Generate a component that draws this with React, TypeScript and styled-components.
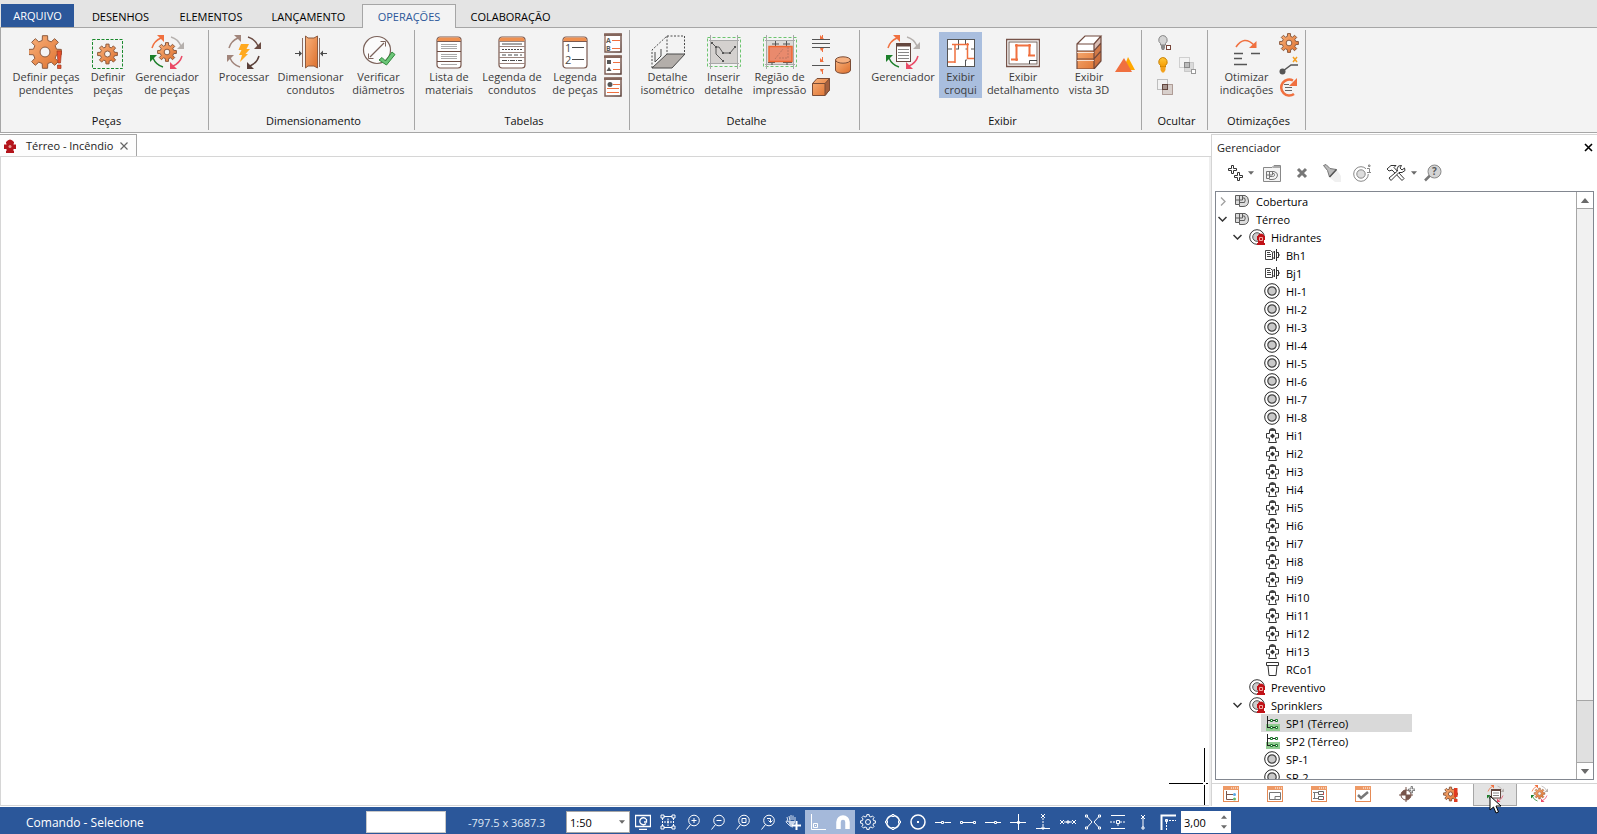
import React from "react";
import styled, { createGlobalStyle, css } from "styled-components";

const GlobalStyle = createGlobalStyle`
  * { box-sizing: border-box; }
  body {
    margin: 0;
    background: #fff;
    font-family: "Open Sans", "Noto Sans", sans-serif;
    font-size: 11px;
    line-height: 13px;
    color: #111;
  }
  button, input, select { font: inherit; color: inherit; }
  button { border: 0; padding: 0; background: none; cursor: default; }
  svg { display: block; flex: none; }
`;

/* ---------- palette ---------- */
const BLUE = "#2b579a";
const LIGHT = "#a9bede";
const ORANGE = "#f0703f";
const BROWN = "#6b4c43";
const INK = "#4a4a4a";

/* ---------- icon helpers ---------- */
function gearPath(cx: number, cy: number, outer: number, inner: number, teeth = 8) {
  const step = (Math.PI * 2) / teeth;
  const pts: string[] = [];
  for (let i = 0; i < teeth; i++) {
    const a = i * step - Math.PI / 2;
    const corners: [number, number][] = [
      [-0.3, inner],
      [-0.2, outer],
      [0.2, outer],
      [0.3, inner],
    ];
    corners.forEach(([k, r]) => {
      pts.push(`${(cx + r * Math.cos(a + k * step)).toFixed(2)} ${(cy + r * Math.sin(a + k * step)).toFixed(2)}`);
    });
  }
  return `M${pts.join("L")}Z`;
}

const HiddenDefs = styled.svg`
  position: absolute;
`;

const Defs = () => (
  <HiddenDefs width="0" height="0" aria-hidden="true">
    <defs>
      <linearGradient id="copper" x1="0" y1="0" x2="1" y2="1">
        <stop offset="0" stopColor="#f9b27c" />
        <stop offset="1" stopColor="#dd6f2c" />
      </linearGradient>
      <linearGradient id="amber" x1="0" y1="0" x2="0" y2="1">
        <stop offset="0" stopColor="#ffc83a" />
        <stop offset="1" stopColor="#f59b00" />
      </linearGradient>
      <linearGradient id="bark" x1="0" y1="0" x2="1" y2="1">
        <stop offset="0" stopColor="#a78378" />
        <stop offset="1" stopColor="#5a3f38" />
      </linearGradient>
    </defs>
  </HiddenDefs>
);

type IconProps = { w?: number; h?: number; children: React.ReactNode; box?: string };
const Icon = ({ w = 34, h, box, children }: IconProps) => (
  <svg width={w} height={h ?? w} viewBox={box ?? `0 0 ${w} ${h ?? w}`} fill="none" aria-hidden="true">
    {children}
  </svg>
);

const Gear = ({ x, y, r }: { x: number; y: number; r: number }) => (
  <g>
    <path d={gearPath(x, y, r, r * 0.72)} fill="url(#copper)" stroke="#8c5a3f" strokeWidth="1" />
    <circle cx={x} cy={y} r={r * 0.3} fill="#f5f5f5" stroke="#8c5a3f" />
  </g>
);

const Cycle = ({ colors }: { colors: string[] }) => (
  <g>
    {colors.map((c, i) => (
      <g key={i} transform={`rotate(${i * 90} 17 17)`}>
        <path d="M2 13Q4 6 11 3" stroke={c} strokeWidth="1.5" />
        <path d="M7 0H14V7Z" fill={c} />
      </g>
    ))}
  </g>
);
const MIX = [ORANGE, "#b5b0ad", "#ea4a66", "#1c7f2a"];
const BROWNS = ["#a1857b", "#6b4c43", "#5a4039", "#a1857b"];

const GreenTick = () => (
  <path d="M17 25L20 22.500L23.500 26L30 17L33 19.500L24.500 30Z" fill="#6cc578" stroke="#2f8a3c" />
);

const Sheet = ({ children }: { children: React.ReactNode }) => (
  <Icon>
    <rect x="5" y="2" width="24" height="31" rx="3" fill="#fff" stroke="#7b5a50" strokeWidth="1.2" />
    <path d="M5.500 6V5Q5.500 2.500 8 2.500H26Q28.500 2.500 28.500 5V6Z" fill="#ef9050" />
    <path d="M5 6.500H29" stroke="#7b5a50" />
    {children}
  </Icon>
);

/* ---------- large ribbon icons ---------- */
const GearAlert = () => (
  <Icon>
    <Gear x={16} y={17} r={16.500} />
    <path d="M28 16H32.500L31.500 28H29ZM28.500 30H32V33.500H28.500Z" fill="#e8502c" stroke="#9c3a20" strokeWidth=".7" />
  </Icon>
);
const GearBox = () => (
  <Icon>
    <rect x="1.500" y="4.500" width="30" height="29" stroke="#1c8a2e" strokeDasharray="3 1.500" />
    <Gear x={16.500} y={19} r={10} />
  </Icon>
);
const GearCycle = () => (
  <Icon>
    <Cycle colors={MIX} />
    <Gear x={17} y={17} r={9.500} />
  </Icon>
);
const Bolt = () => (
  <Icon>
    <Cycle colors={BROWNS} />
    <path d="M14 9H22L19.500 14H23L18.500 19H21L13 27L15 20H12L14.500 15H11.500Z" fill="#ffa91f" />
  </Icon>
);
const DuctSize = () => (
  <Icon>
    <path d="M11.500 1L14 3H20L23.500 1V33L20 31H14L11.500 33Z" fill="url(#copper)" stroke="#8c5a3f" />
    <path d="M8.500 3V32M25.500 3V32" stroke="#8c6f66" />
    <path d="M1 18.500H6M28 18.500H33" stroke={INK} />
    <path d="M5 15.500L8 18.500L5 21.500ZM29 15.500L26 18.500L29 21.500Z" fill={INK} />
  </Icon>
);
const DiameterCheck = () => (
  <Icon>
    <circle cx="15" cy="15" r="13.500" fill="#fbfbfb" stroke="#7b625a" strokeWidth="1.2" />
    <path d="M8 22L22 8" stroke="#7b625a" strokeWidth="1.300" />
    <path d="M6.500 18.500V23.500H11.500M18.500 6.500H23.500V11.500" stroke="#7b625a" />
    <GreenTick />
  </Icon>
);
const MaterialSheet = () => (
  <Sheet>
    <path d="M9 9.500H25M9 11.500H25M9 13.500H25M9 19.500H25M9 21.500H25M9 23.500H25M9 29.500H25" stroke="#aaa" />
    <path d="M5 16.500H29M5 26.500H29" stroke={BROWN} />
  </Sheet>
);
const LineSheet = () => (
  <Icon>
    <rect x="4" y="2" width="26" height="31" rx="3" fill="#fff" stroke="#7b5a50" strokeWidth="1.2" />
    <path d="M4.500 6V5Q4.500 2.500 7 2.500H27Q29.500 2.500 29.500 5V6Z" fill="#ef9050" />
    <path d="M4 6.500H30M4 11.500H30M4 17.500H30M4 22.500H30M4 28.500H30" stroke="#9c867f" />
    <path d="M7 9H27" stroke={INK} />
    <path d="M7 14.500H27" stroke={INK} strokeDasharray="2 1" />
    <path d="M7 20H27" stroke={INK} strokeDasharray="4 2" />
    <path d="M7 25.500H27" stroke={INK} strokeDasharray="5 1 1 1" />
  </Icon>
);
const SvgText = styled.text<{ $size?: number }>`
  font: bold ${(p) => p.$size ?? 10}px "Open Sans", sans-serif;
  fill: #5a5a5a;
`;
const PlainText = styled.text`
  font: 11px "Open Sans", sans-serif;
  fill: #4a4a4a;
`;
const NumberSheet = () => (
  <Sheet>
    <PlainText x="7" y="17">1</PlainText>
    <PlainText x="7" y="29">2</PlainText>
    <path d="M14 12.500H26M14 24.500H26" stroke={INK} />
  </Sheet>
);
const Isometric = () => (
  <Icon>
    <path d="M16 19H34L21 33H1Z" fill="#b3aeaa" stroke={INK} />
    <path d="M1 33V15L16 1V19M16 1H33.500V19" stroke={INK} strokeDasharray="2 1.500" />
    <path d="M4 17V27L10 21V14" stroke={INK} />
  </Icon>
);
const InsertDetail = () => (
  <Icon>
    <rect x="0.500" y="2.500" width="33" height="29" stroke="#6cc56f" strokeDasharray="3 2" />
    <rect x="4" y="5" width="26" height="24" fill="#d4d1cf" />
    <path d="M3.500 0V34M30.500 0V34M2 5.500H32M2 28.500H32" stroke="#a9a9a9" />
    <path d="M5 8L9 12H12L16 18H23L28 12M9 12V19L16 26" stroke="#555" />
    <path d="M4 7H6V9H4ZM8 11H10V13H8ZM15 17H17V19H15ZM22 17H24V19H22ZM27 11H29V13H27ZM15 25H17V27H15Z" fill="#555" />
  </Icon>
);
const PrintRegion = () => (
  <Icon>
    <rect x="0.500" y="2.500" width="33" height="29" stroke="#6cc56f" strokeDasharray="3 2" />
    <path d="M3.500 0V34M30.500 0V34M2 5.500H32M2 29.500H32" stroke="#a9a9a9" />
    <rect x="4" y="6" width="26" height="23" fill="#dcdad8" />
    <path d="M12.500 6V12M23.500 6V12M9 9H16M20 9H27M5 27.500H12M9 22V30M24 24V30M20 27.500H29" stroke="#555" />
    <rect x="6" y="11.500" width="23" height="15" fill="#e98a6d" stroke="#f0652f" strokeWidth="1.500" />
    <path d="M25 12V23H16M12 24L20 14" stroke="#bd7560" strokeDasharray="2 1" />
  </Icon>
);
const DocCycle = () => (
  <Icon>
    <Cycle colors={MIX} />
    <rect x="10.500" y="8.500" width="14" height="18" fill="#fff" stroke="#63473f" />
    <path d="M10 10H25" stroke="#63473f" strokeWidth="3" />
    <path d="M12 14.500H23M12 17.500H23M12 20.500H23M12 23.500H23" stroke="#888" />
  </Icon>
);
const Sketch = () => (
  <Icon>
    <rect x="3.500" y="4.500" width="27" height="27" fill="#fff" stroke="#555" />
    <path d="M14.500 5V14M21.500 5V9M4 14H8M12 14H15M21.500 25V31M21.500 25H23M27 14H30M21.500 14H24" stroke="#555" />
    <path d="M4 27H11M11 28V9M8 9.500H25M23.500 8V24M23 23.500H30" stroke={ORANGE} strokeWidth="1.500" />
  </Icon>
);
const DetailSheet = () => (
  <Icon>
    <rect x="0.500" y="4.500" width="33" height="27" fill="#fff" stroke="#77544a" strokeWidth="1.500" />
    <rect x="3" y="7" width="28" height="22" stroke="#77645c" />
    <path d="M5 24.500H12M10.500 26V9M9 10.500H25M23.500 9V20M22 20.500H29" stroke={ORANGE} strokeWidth="2" />
    <path d="M23.500 29V25.500H31" stroke="#444" />
  </Icon>
);
const Building = () => (
  <Icon>
    <path d="M5 9L13 1H29L22 9V34H5Z" fill="#fff" />
    <path d="M5 16H22L29 8V26L22 34H5Z" fill="url(#copper)" />
    <path d="M22 9L29 1V26L22 34Z" fill="#a8593e" fillOpacity=".35" />
    <path d="M5 9H22V34H5ZM5 9L13 1H29L22 9M29 1V26L22 34M5 16H22L29 8M5 24H22L29 16" stroke="#70493d" strokeWidth="1.200" />
    <path d="M5 17.500H22M5 25.500H22" stroke="#fff" strokeOpacity=".7" />
  </Icon>
);
const Optimize = () => (
  <Icon>
    <path d="M6 12Q14 0 24 10" stroke={ORANGE} strokeWidth="1.500" />
    <path d="M26.500 6V13H19Z" fill={ORANGE} />
    <path d="M4 18.500H13M21 18.500H30M4 23.500H12M4 29.500H17" stroke="#555" strokeWidth="1.600" />
  </Icon>
);

/* ---------- small ribbon icons ---------- */
const MiniSheet = ({ children }: { children: React.ReactNode }) => (
  <Icon w={18} h={20}>
    <rect x="1" y="1" width="16" height="18" fill="#fff" stroke="url(#bark)" strokeWidth="1.500" />
    <path d="M0 0.500H18V3H0Z" fill="#84665c" />
    {children}
  </Icon>
);
const SheetAB = () => (
  <MiniSheet>
    <SvgText $size={7} x="2" y="10">A</SvgText>
    <SvgText $size={7} x="2" y="18">B</SvgText>
    <path d="M8 7.500H16M8 15.500H16" stroke={ORANGE} />
  </MiniSheet>
);
const SheetShapes = () => (
  <MiniSheet>
    <path d="M3 5H7V9H3ZM5 12L7.500 16H2.500Z" fill="#555" />
    <path d="M9 7.500H16M9 14.500H16" stroke={ORANGE} />
  </MiniSheet>
);
const SheetDot = () => (
  <MiniSheet>
    <circle cx="6" cy="7.500" r="2.500" fill="#555" />
    <path d="M9 7.500H16M3 11.500H15M3 15.500H15" stroke={ORANGE} />
  </MiniSheet>
);
const LevelsTwo = () => (
  <Icon w={18}>
    <path d="M0 5.500H18M0 9.500H18M0 13.500H18" stroke="#555" />
    <path d="M10.500 1V5M10.500 14V18" stroke={ORANGE} />
    <path d="M8 1L12 5H8ZM8 14H12L9 17Z" fill={ORANGE} />
  </Icon>
);
const LevelsOne = () => (
  <Icon w={18}>
    <path d="M0 9.500H18" stroke="#555" />
    <path d="M10.500 1V6M10.500 13V18" stroke={ORANGE} />
    <path d="M8 2L12 6H8ZM8 13H12L9 16Z" fill={ORANGE} />
  </Icon>
);
const Cube = () => (
  <Icon w={18}>
    <path d="M0.500 5.500L5 0.500H17.500V12L13 17.500H0.500Z" fill="url(#copper)" stroke="#7b4d37" />
    <path d="M13 5.500L17.500 0.500V12L13 17.500Z" fill="#a6603d" stroke="#7b4d37" />
    <path d="M0.500 5.500H13" stroke="#7b4d37" />
  </Icon>
);
const Cylinder = () => (
  <Icon w={18}>
    <path d="M1.500 4V14C1.500 18.500 16.500 18.500 16.500 14V4Z" fill="url(#copper)" stroke="#7b4d37" />
    <ellipse cx="9" cy="4" rx="7.500" ry="3.200" fill="#f6b080" stroke="#7b4d37" />
  </Icon>
);
const Mountains = () => (
  <Icon w={20} h={16}>
    <path d="M13 0L20 13H8Z" fill="#ffa800" />
    <path d="M9 1L17 15H0Z" fill={ORANGE} />
  </Icon>
);
const BulbOff = () => (
  <Icon w={16} h={18}>
    <path d="M5.500 1.500A4.500 4.500 0 0 1 8.500 9.500V11H3.500V9.500A4.500 4.500 0 0 1 5.500 1.500Z" fill="#d4d4d4" stroke="#858585" />
    <path d="M4 11H8V14L7 16H5L4 14Z" fill="#8a8a8a" />
    <rect x="9.500" y="11.500" width="4" height="4" fill="#fff" stroke="#77453a" />
  </Icon>
);
const BulbOn = () => (
  <Icon w={16} h={18}>
    <path d="M5.500 1.500A4.500 4.500 0 0 1 8.500 9.500V11H3.500V9.500A4.500 4.500 0 0 1 5.500 1.500Z" fill="url(#amber)" stroke="#c98000" />
    <path d="M3.500 11H8.500V14L7 16.500H5L3.500 14Z" fill="#f3a11c" />
  </Icon>
);
const HideRegion = () => (
  <Icon w={18}>
    <rect x="1.500" y="1.500" width="10" height="10" stroke="#888" strokeDasharray="1 1" />
    <rect x="6.500" y="6.500" width="10" height="10" fill="#d8cfcb" stroke="#77544a" strokeDasharray="1 1" />
    <rect x="6.500" y="6.500" width="5" height="5" fill="#a8958e" stroke="#63473f" />
  </Icon>
);
const HideGroup = () => (
  <Icon w={18}>
    <rect x="1.500" y="1.500" width="10" height="10" stroke="#aaa" strokeDasharray="1 1" />
    <rect x="6.500" y="6.500" width="9" height="9" fill="#dadada" stroke="#aaa" strokeDasharray="1 1" />
    <rect x="6.500" y="6.500" width="5" height="5" fill="#bbb" stroke="#888" />
    <rect x="13.500" y="13.500" width="4" height="4" fill="#fff" stroke="#999" />
  </Icon>
);
const GearSmall = () => (
  <Icon w={20}>
    <Gear x={10} y={10} r={9.500} />
  </Icon>
);
const NodeLine = () => (
  <Icon w={20}>
    <path d="M4 16L12 10H19" stroke="#555" strokeWidth="1.500" />
    <circle cx="3.500" cy="16.500" r="3" fill="#555" />
    <path d="M14 2L18 7M18 2L14 7" stroke="#f5a020" strokeWidth="1.500" />
  </Icon>
);
const Redo = () => (
  <Icon w={20}>
    <path d="M14 3.500A8 8 0 1 0 15 17" stroke={ORANGE} strokeWidth="2.500" />
    <path d="M18 1V9H10Z" fill={ORANGE} />
    <path d="M5 7.500H10M6 10.500H13M6 13.500H13" stroke="#666" />
  </Icon>
);

/* ---------- tree icons ---------- */
const FloorIcon = () => (
  <Icon w={16}>
    <path d="M1.500 2.500H11Q14.500 3.500 14.500 8Q14.500 13.500 9 13.500H5.500V11.500H1.500Z" fill="#dcdcdc" stroke="#5c5c5c" />
    <path d="M5.500 2.500V11.500M1.500 7H8.500M8.500 2.500V7M8.500 5H10.500Q12 7 10.500 9.500H5.500" stroke="#5c5c5c" />
  </Icon>
);
const NetworkIcon = () => (
  <Icon w={16}>
    <circle cx="8" cy="8" r="7.300" fill="#fff" stroke="#333" />
    <circle cx="8" cy="8" r="4.300" fill="#ccc" stroke="#555" />
    <path d="M9 6Q12 3 15 6V7H16V11H15V14H16V16H8V14H9V11H8V7H9Z" fill="#c11218" />
    <path d="M10.500 8.500H13.500V11.500H10.500Z" stroke="#f0a8a0" />
  </Icon>
);
const PumpIcon = () => (
  <Icon w={16}>
    <path d="M1.500 3.500H6.500L8.500 5.500V12.500H1.500Z" fill="#fff" stroke="#444" />
    <path d="M3 5.500H6M3 7.500H7M3 9.500H7M8.500 11H10M8.500 5H10" stroke="#444" />
    <path d="M10.500 4V12M12.500 2V14M12 5.500H14.500V10.500H12M14.500 8H16" stroke="#333" />
  </Icon>
);
const RingIcon = () => (
  <Icon w={16}>
    <circle cx="8" cy="8" r="7.300" fill="#fff" stroke="#222" />
    <circle cx="8" cy="8" r="4.200" fill="#c9c9c9" stroke="#444" strokeWidth="1.200" />
  </Icon>
);
const HydrantIcon = () => (
  <Icon w={16}>
    <path d="M5 3Q8.500 -1 12 3V4H5Z" fill="#444" />
    <path d="M5.500 4V6.500H2.500V11H5.500V13L4.500 15.500H12.500L11.500 13V11H14.500V6.500H11.500V4" stroke="#333" fill="#fff" />
    <path d="M8.500 6.500L11 9L8.500 11.500L6 9Z" fill="#333" />
  </Icon>
);
const BoxIcon = () => (
  <Icon w={16}>
    <path d="M2.500 1.500H14.500V4.500H2.500ZM4 5L5 14.500H12L13 5" stroke="#333" fill="#fff" />
  </Icon>
);
const SprinklerIcon = () => (
  <Icon w={16}>
    <path d="M2 9H16V16H2Z" fill="#92cc92" />
    <path d="M3.500 1V12.500M3 5.500H14M3 12.500H14" stroke="#222" />
    <path d="M6.500 4.500H8.500V6.500H6.500ZM11.500 4.500H13.500V6.500H11.500ZM6.500 11.500H8.500V13.500H6.500ZM11.500 11.500H13.500V13.500H11.500Z" fill="#fff" stroke="#1b7a2a" />
  </Icon>
);
const RedHydrant = () => (
  <Icon w={12} h={14}>
    <path d="M2 3Q6 -2 10 3V4.500H9.500V5.500H12V10H9.500V12H10V14H2V12H2.500V10H0V5.500H2.500V4.500H2Z" fill="#b3141b" />
    <circle cx="6" cy="7.500" r="1.500" fill="#e39a93" />
  </Icon>
);

/* ---------- panel toolbar icons ---------- */
const PlusPair = () => (
  <Icon w={16}>
    <path d="M4.500 0.500H6.500V3.500H9.500V5.500H6.500V8.500H4.500V5.500H1.500V3.500H4.500ZM10.500 7.500H12.500V10.500H15.500V12.500H12.500V15.500H10.500V12.500H7.500V10.500H10.500Z" stroke="#333" fill="#fff" />
  </Icon>
);
const FolderIcon = () => (
  <Icon w={18}>
    <path d="M0.500 3.500H9L11 1.500H17.500V17.500H0.500Z" fill="#f4f4f4" stroke="#888" />
    <path d="M1 4H17V2H11L9 4Z" fill="#aaa" />
    <path d="M3.500 7.500H11Q14.500 8.500 14.500 11Q14 15.500 9 15.500H6.500V14.500H3.500ZM6.500 7.500V14M3.500 11H9.500M9.500 7.500V11M9.500 9.500H11Q12.500 12.500 9.500 12.500H7" stroke="#777" />
  </Icon>
);
const DeleteIcon = () => (
  <Icon w={12}>
    <path d="M2 2L10 10M10 2L2 10" stroke="#777" strokeWidth="3" />
  </Icon>
);
const TorchIcon = () => (
  <Icon w={18}>
    <path d="M14 6L18 12V18H12L6 13Z" fill="#f0f0f0" />
    <path d="M0.500 1.500L3 0.500L7 4.500L13.500 5.500L6.500 13L4.500 6.500Z" fill="#bbb" stroke="#777" />
    <path d="M13.500 5.500L6.500 13" stroke="#555" strokeWidth="1.500" />
  </Icon>
);
const RingInfo = () => (
  <Icon w={18}>
    <circle cx="8" cy="10" r="7.300" stroke="#888" />
    <circle cx="8" cy="10" r="4.200" fill="#ddd" stroke="#888" />
    <path d="M13 0H18V10H13Z" fill="#fff" />
    <path d="M15.500 1H17V2.500H15.500ZM14 4.500H16.500V8.500M14 8.500H18" stroke="#888" />
  </Icon>
);
const ToolsIcon = () => (
  <Icon w={20} h={18}>
    <path d="M1 5L5 1.500H10L8 3.500L18 14.500L16 16.500L6 6L3 7Z" fill="#fff" stroke="#333" />
    <path d="M18.500 4L16 6L14 4L15.500 1.500L12.500 2L11 5L11.500 7L3 14L5 16.500L13 8.500L16 8.500L19 6.500Z" fill="#fff" stroke="#333" />
  </Icon>
);
const HelpLens = () => (
  <Icon w={18}>
    <path d="M6 11.500L1 16.500" stroke="#777" strokeWidth="2.500" />
    <circle cx="10.500" cy="7.500" r="6.500" fill="#d4d4d4" stroke="#888" />
    <SvgText x="8" y="11">?</SvgText>
  </Icon>
);

/* ---------- panel page icons ---------- */
const WindowFrame = ({ children }: { children: React.ReactNode }) => (
  <Icon w={16}>
    <rect x="0.500" y="0.500" width="15" height="15" fill="#fff" stroke="#e58a55" />
    <path d="M0 0H16V4H0Z" fill="#ee9a66" />
    <path d="M8 2H15" stroke="#fff" strokeDasharray="1 1" />
    {children}
  </Icon>
);
const PageTree = () => (
  <WindowFrame>
    <path d="M3.500 5V13.500H10M3.500 8.500H10" stroke="#77544a" />
    <circle cx="11.500" cy="8.500" r="1.500" fill="#5aa9e6" />
    <circle cx="11.500" cy="13" r="1.500" fill="#62b96a" />
  </WindowFrame>
);
const PageNote = () => (
  <WindowFrame>
    <path d="M2.500 6.500H13.500V13.500H2.500ZM8 13V10.500H13" stroke="#777" />
  </WindowFrame>
);
const PageBlocks = () => (
  <WindowFrame>
    <path d="M2 6.500H7M2 12.500H7M3.500 6V12" stroke="#777" />
    <path d="M7.500 5.500H12.500V8.500H7.500ZM7.500 10.500H12.500V13.500H7.500Z" stroke="#666" />
    <path d="M12.500 7V9M12.500 12V14" stroke="#e04848" />
  </WindowFrame>
);
const PageCheck = () => (
  <WindowFrame>
    <path d="M3 9L6 12L13 6" stroke="#777" strokeWidth="2.500" />
  </WindowFrame>
);
const PageTarget = () => (
  <Icon w={16}>
    <circle cx="7" cy="9" r="5" fill="#fff" stroke="#77544a" />
    <path d="M7 9V4A5 5 0 0 0 2 9ZM7 9V14A5 5 0 0 0 12 9Z" fill="#77544a" />
    <path d="M7 1V16M0 9H14" stroke="#77544a" />
    <path d="M12 0.500H13.500V3H16V4.500H13.500V7H12V4.500H9.500V3H12Z" fill="#fff" stroke="#666" strokeWidth=".8" />
  </Icon>
);
const PageGearAlert = () => (
  <Icon w={16}>
    <Gear x={7.500} y={8} r={7} />
    <path d="M11 2H14.500V11H11ZM11 13H14.500V16H11Z" fill="#e03a20" />
  </Icon>
);
const PageDocs = () => (
  <Icon w={17} box="0 0 34 34">
    <Cycle colors={MIX} />
    <rect x="9" y="9" width="18" height="17" fill="#fff" stroke="#63473f" strokeWidth="2" />
    <path d="M9 10H27" stroke="#63473f" strokeWidth="4" />
    <path d="M12 16H24M12 21H24" stroke="#888" strokeWidth="2" />
  </Icon>
);
const PageParts = () => (
  <Icon w={17} box="0 0 34 34">
    <Cycle colors={MIX} />
    <Gear x={17} y={17} r={11} />
  </Icon>
);

/* ---------- ribbon ---------- */
const Screen = styled.div`
  display: flex;
  flex-direction: column;
  height: 100vh;
  overflow: hidden;
`;

const TabStrip = styled.nav`
  flex: none;
  display: flex;
  align-items: flex-end;
  height: 28px;
  padding: 0 1px;
  background: #e4e4e4;
  border-bottom: 1px solid #a6a6a6;
`;

const RibbonTab = styled.button<{ $kind?: "file" | "active"; $width: number }>`
  width: ${(p) => p.$width}px;
  height: 23px;
  padding-top: 1px;
  color: #000;
  ${(p) =>
    p.$kind === "file" &&
    css`
      background: ${BLUE};
      color: #fff;
      padding: 0 0 1px;
    `}
  ${(p) =>
    p.$kind === "active" &&
    css`
      height: 24px;
      margin-bottom: -1px;
      color: ${BLUE};
      background: #f3f3f3;
      border: 1px solid #a6a6a6;
      border-bottom: 0;
      padding-top: 0;
    `}
`;

const Ribbon = styled.header`
  flex: none;
  display: flex;
  height: 105px;
  padding-top: 2px;
  background: #f3f3f3;
  border-left: 1px solid #a6a6a6;
  border-bottom: 1px solid #a6a6a6;
`;

const Group = styled.section`
  display: flex;
  flex-direction: column;
  height: 100px;
  border-right: 1px solid #a6a6a6;
`;

const GroupTools = styled.div<{ $left: number; $right: number }>`
  display: flex;
  align-items: flex-start;
  height: 84px;
  padding: 2px ${(p) => p.$right}px 0 ${(p) => p.$left}px;
`;

const GroupTitle = styled.h2`
  margin: 0;
  padding-left: 4px;
  font-size: 11px;
  font-weight: 400;
  line-height: 13px;
  text-align: center;
  color: #111;
`;

const BigButton = styled.button<{ $width: number; $active?: boolean }>`
  display: flex;
  flex-direction: column;
  align-items: center;
  width: ${(p) => p.$width}px;
  height: 66px;
  padding-top: 3px;
  gap: 1px;
  color: #3c3c3c;
  white-space: pre;
  text-align: center;
  background: ${(p) => (p.$active ? LIGHT : "transparent")};
`;

const SmallColumn = styled.div`
  display: flex;
  flex-direction: column;
  justify-content: center;
  width: 22px;
  height: 66px;
`;

const SmallButton = styled.button`
  display: grid;
  place-items: center;
  width: 22px;
  height: 22px;
`;

type Tool = { label: string; icon: React.ReactNode; width: number; active?: boolean };
type Small = [string, React.ReactNode];
type GroupData = { title: string; left: number; right: number; tools: Tool[]; small?: Small[][] };

const groups: GroupData[] = [
  {
    title: "Peças", left: 9, right: 8,
    tools: [
      { label: "Definir peças\npendentes", icon: <GearAlert />, width: 72 },
      { label: "Definir\npeças", icon: <GearBox />, width: 52 },
      { label: "Gerenciador\nde peças", icon: <GearCycle />, width: 66 },
    ],
  },
  {
    title: "Dimensionamento", left: 5, right: 4,
    tools: [
      { label: "Processar", icon: <Bolt />, width: 60 },
      { label: "Dimensionar\ncondutos", icon: <DuctSize />, width: 73 },
      { label: "Verificar\ndiâmetros", icon: <DiameterCheck />, width: 63 },
    ],
  },
  {
    title: "Tabelas", left: 7, right: 5,
    tools: [
      { label: "Lista de\nmateriais", icon: <MaterialSheet />, width: 54 },
      { label: "Legenda de\ncondutos", icon: <LineSheet />, width: 72 },
      { label: "Legenda\nde peças", icon: <NumberSheet />, width: 54 },
    ],
    small: [[["Legenda de textos", <SheetAB />], ["Legenda de símbolos", <SheetShapes />], ["Legenda geral", <SheetDot />]]],
  },
  {
    title: "Detalhe", left: 7, right: 5,
    tools: [
      { label: "Detalhe\nisométrico", icon: <Isometric />, width: 61 },
      { label: "Inserir\ndetalhe", icon: <InsertDetail />, width: 51 },
      { label: "Região de\nimpressão", icon: <PrintRegion />, width: 61 },
    ],
    small: [
      [["Corte duplo", <LevelsTwo />], ["Corte simples", <LevelsOne />], ["Bloco", <Cube />]],
      [["Reservatório", <Cylinder />]],
    ],
  },
  {
    title: "Exibir", left: 7, right: 5,
    tools: [
      { label: "Gerenciador", icon: <DocCycle />, width: 72 },
      { label: "Exibir\ncroqui", icon: <Sketch />, width: 43, active: true },
      { label: "Exibir\ndetalhamento", icon: <DetailSheet />, width: 82 },
      { label: "Exibir\nvista 3D", icon: <Building />, width: 50 },
    ],
    small: [[["Terreno", <Mountains />]]],
  },
  {
    title: "Ocultar", left: 12, right: 9,
    tools: [],
    small: [
      [["Ocultar seleção", <BulbOff />], ["Exibir tudo", <BulbOn />], ["Ocultar região", <HideRegion />]],
      [["Ocultar grupo", <HideGroup />]],
    ],
  },
  {
    title: "Otimizações", left: 7, right: 5,
    tools: [{ label: "Otimizar\nindicações", icon: <Optimize />, width: 63 }],
    small: [[["Configurar", <GearSmall />], ["Remover nó", <NodeLine />], ["Atualizar", <Redo />]]],
  },
];

const ribbonTabs: { label: string; width: number; kind?: "file" | "active" }[] = [
  { label: "ARQUIVO", width: 73, kind: "file" },
  { label: "DESENHOS", width: 93 },
  { label: "ELEMENTOS", width: 88 },
  { label: "LANÇAMENTO", width: 107 },
  { label: "OPERAÇÕES", width: 94, kind: "active" },
  { label: "COLABORAÇÃO", width: 109 },
];

/* ---------- work area ---------- */
const Workspace = styled.main`
  flex: 1;
  display: flex;
  min-height: 0;
  padding: 1px 0;
`;

const DrawingPane = styled.section`
  flex: 1;
  min-width: 0;
  display: flex;
  flex-direction: column;
`;

const DocTabs = styled.div`
  flex: none;
  height: 23px;
  border-bottom: 1px solid #d6d6d6;
`;

const DocTab = styled.div`
  display: flex;
  align-items: center;
  width: 137px;
  height: 22px;
  padding: 0 8px 0 4px;
  border: 1px solid #a6a6a6;
  border-width: 1px 1px 0 0;
  background: #fdfdfd;
  color: #222;
`;

const DocName = styled.span`
  flex: 1;
  padding-left: 10px;
  white-space: nowrap;
`;

const Canvas = styled.div`
  position: relative;
  flex: 1;
  margin-right: 2px;
  border: 1px solid #d6d6d6;
  border-width: 0 0 1px 1px;
  box-shadow: 2px 0 0 #eeeeee;
`;

const Crosshair = styled.svg`
  position: absolute;
  right: 0;
  bottom: 0;
`;

const Panel = styled.aside`
  flex: none;
  display: flex;
  flex-direction: column;
  width: 386px;
  border: 1px solid #d4d4d4;
  border-width: 1px 0 0 1px;
`;

const PanelTitle = styled.div`
  flex: none;
  display: flex;
  justify-content: space-between;
  align-items: center;
  height: 24px;
  padding: 0 4px 0 5px;
  color: #222;
`;

const PanelTools = styled.div`
  flex: none;
  display: flex;
  align-items: center;
  height: 28px;
  padding-left: 12px;
`;

const PanelTool = styled.button<{ $caret?: boolean; $apart?: boolean }>`
  display: flex;
  align-items: center;
  justify-content: center;
  gap: 5px;
  width: ${(p) => (p.$caret ? 33 : 30)}px;
  height: 26px;
  margin-left: ${(p) => (p.$apart ? 8 : 0)}px;
`;

const TreeBox = styled.div`
  flex: 1;
  min-height: 0;
  display: flex;
  margin: 4px 3px 3px 3px;
  border: 1px solid #828790;
`;

const TreeList = styled.ul`
  flex: 1;
  min-width: 0;
  margin: 0;
  padding: 0;
  list-style: none;
  overflow: hidden;
`;

const TreeRow = styled.li<{ $level: number }>`
  display: flex;
  height: 18px;
  padding-left: ${(p) => p.$level * 15}px;
`;

const Expander = styled.button`
  display: grid;
  place-items: center;
  width: 15px;
  height: 18px;
  padding-right: 2px;
`;

const TreeItem = styled.button<{ $selected?: boolean }>`
  display: flex;
  align-items: center;
  gap: 6px;
  min-width: 151px;
  height: 18px;
  padding: 0 3px;
  white-space: nowrap;
  color: #000;
  background: ${(p) => (p.$selected ? "#d9d9d9" : "transparent")};
`;

const ScrollBar = styled.div`
  flex: none;
  display: flex;
  flex-direction: column;
  width: 17px;
  background: #e0e0e0;
  border-left: 1px solid #a6a6a6;
`;

const ScrollButton = styled.button`
  display: grid;
  place-items: center;
  height: 16px;
  background: #fff;
`;

const Thumb = styled.div`
  flex: 8;
  background: #f1f1f1;
  border: 1px solid #a6a6a6;
  border-width: 1px 0;
`;

const TrackRest = styled.div`
  flex: 1;
  border-bottom: 1px solid #a6a6a6;
`;

const PageTabs = styled.div`
  flex: none;
  display: flex;
  height: 23px;
  border-top: 1px solid #d4d4d4;
`;

const PageTab = styled.button<{ $active?: boolean }>`
  position: relative;
  display: grid;
  place-items: center;
  width: 44px;
  height: 22px;
  padding-bottom: 3px;
  border: ${(p) => (p.$active ? "1px solid #a6a6a6" : "0")};
  border-top: 0;
  background: ${(p) => (p.$active ? "#e3e3e3" : "transparent")};
  &:first-child { margin-left: -3px; }
`;

const Pointer = styled.svg`
  position: absolute;
  left: 15px;
  top: 11px;
  z-index: 2;
`;

/* ---------- status bar ---------- */
const StatusBar = styled.footer`
  flex: none;
  display: flex;
  align-items: center;
  height: 27px;
  padding: 3px 0 0 26px;
  background: ${BLUE};
  color: #fff;
`;

const Command = styled.label`
  display: flex;
  align-items: center;
  justify-content: space-between;
  width: 420px;
  font-size: 12px;
`;

const CommandInput = styled.input`
  width: 80px;
  height: 22px;
  border: 1px solid #c8c8c8;
  background: #fff;
  color: #000;
`;

const Coordinates = styled.output`
  width: 120px;
  padding-left: 22px;
  color: #dfe8f5;
  white-space: nowrap;
`;

const ScaleField = styled.div`
  display: grid;
  grid-template-columns: 1fr 11px;
  align-items: center;
  width: 64px;
  height: 22px;
  background: #fff;
  color: #000;
`;

const ScaleSelect = styled.select`
  grid-area: 1 / 1 / 2 / 3;
  width: 100%;
  height: 22px;
  padding: 0 3px;
  border: 1px solid #a6a6a6;
  background: transparent;
  appearance: none;
`;

const ScaleCaret = styled.span`
  grid-area: 1 / 2 / 2 / 3;
  pointer-events: none;
`;

const StatusButton = styled.button<{ $active?: boolean }>`
  display: grid;
  place-items: center;
  width: 25px;
  height: 24px;
  background: ${(p) => (p.$active ? "#a5b9da" : "transparent")};
`;

const Spinner = styled.div`
  display: flex;
  width: 50px;
  height: 22px;
  margin-left: 1px;
  background: #fff;
`;

const SpinnerInput = styled.input`
  width: 36px;
  border: 0;
  padding: 0 0 0 3px;
  background: transparent;
  color: #000;
`;

const SpinnerArrows = styled.div`
  display: flex;
  flex-direction: column;
  justify-content: space-between;
  padding: 4px;
`;

const Caret = ({ up, wide }: { up?: boolean; wide?: boolean }) => (
  <Icon w={wide ? 10 : 6} h={wide ? 5 : 4} box="0 0 10 6">
    <path d={up ? "M0 6L5 0L10 6Z" : "M0 0H10L5 6Z"} fill="#6a6a6a" />
  </Icon>
);

const Lens = ({ d }: { d: string }) => (
  <>
    <circle cx="9" cy="6.500" r="5.300" />
    <path d={`M5.500 10.500L1.500 15.500M${d}`} />
  </>
);

const statusIcons: { label: string; active?: boolean; art: React.ReactNode }[] = [
  { label: "Redesenhar", art: <path d="M.5 1.500H15.500V12.500H.5ZM4 15.500H12M11 9.500A3.500 3.500 0 1 1 11 5M11.500 5V8H9" strokeWidth="1.300" /> },
  { label: "Zoom janela total", art: <><path d="M2.500 4V12M13.500 4V12M8 4.500V12M4 8H12" strokeDasharray="2 1" /><path d="M1 1H4V4H1ZM12 1H15V4H12ZM1 12H4V15H1ZM12 12H15V15H12ZM4 2.500H12M4 13.500H12M7 8H9" /></> },
  { label: "Aumentar zoom", art: <Lens d="9 4V9M6.500 6.500H11.500" /> },
  { label: "Diminuir zoom", art: <Lens d="6.500 6.500H11.500" /> },
  { label: "Zoom na janela", art: <Lens d="7 4.500H11V8.500H7Z" /> },
  { label: "Zoom anterior", art: <Lens d="7 4.500H10.500V8M8.500 6.500L10.500 8.500L12.500 6.500" /> },
  { label: "Deslocar", art: <><path d="M4 11L1 8Q1 6 3 7.500L2 3M4 2L5 7M6 1V6M8 1.500V6M10 3V7M4 11Q6 13 8 13" stroke="#d6e0f0" /><path d="M3 7H10V9L7 12H5Z" fill="#c9d6ea" stroke="none" /><path d="M11.500 7V16M7 11.500H16" strokeWidth="2" /></> },
  { label: "Ortogonal", active: true, art: <path d="M1.500 0V15.500H16M3.500 9.500H7.500V13.500H3.500ZM5 11.500H6" /> },
  { label: "Captura", active: true, art: <path d="M3.500 15V8A4.500 4.500 0 0 1 12.500 8V15" strokeWidth="4.500" /> },
  { label: "Configurar captura", art: <><path d={gearPath(8, 8, 7.500, 5.800)} /><circle cx="8" cy="8" r="2.500" /></> },
  { label: "Quadrante", art: <><circle cx="8" cy="8" r="6.500" strokeWidth="1.500" /><path d="M7 .5H9V2.500H7ZM7 13.500H9V15.500H7ZM.5 7H2.500V9H.5ZM13.500 7H15.500V9H13.500Z" fill={BLUE} /></> },
  { label: "Centro", art: <><circle cx="8" cy="8" r="7" strokeWidth="1.500" /><path d="M7 8H9" strokeWidth="2" /></> },
  { label: "Ponto médio", art: <path d="M0 8.500H6.500M9.500 8.500H16M6.500 7.500H8.500V9.500H6.500Z" /> },
  { label: "Ponto extremo", art: <path d="M3 8.500H13M.5 7.500H2.500V9.500H.5ZM13.500 7.500H15.500V9.500H13.500Z" /> },
  { label: "Ponto próximo", art: <path d="M0 8.500H9M11.500 8.500H16M9.500 7.500H11.500V9.500H9.500Z" /> },
  { label: "Interseção", art: <path d="M0 8.500H16M8.500 0V16M7.500 7.500H9.500V9.500H7.500Z" /> },
  { label: "Perpendicular", art: <><path d="M6 0L10 4M10 0L6 4M1 14.500H15M7 13H9V15H7Z" /><path d="M8 4V13" strokeDasharray="2 1" /></> },
  { label: "Extensão", art: <path d="M0 6L4 10M4 6L0 10M12 6L16 10M16 6L12 10M4 8H12M7 7H9V9H7Z" /> },
  { label: "Nó", art: <path d="M2.500 3L7 8L2.500 13M13.500 3L9 8L13.500 13M.5 1H2.500V3H.5ZM13.500 1H15.500V3H13.500ZM.5 13H2.500V15H.5ZM13.500 13H15.500V15H13.500Z" /> },
  { label: "Paralela", art: <><path d="M1 1.500H15M1 14.500H15M6.500 6.500H9.500V9.500H6.500ZM8 9V12" /><path d="M0 8H6M10 8H16" strokeDasharray="2 1" /></> },
  { label: "Projeção", art: <path d="M6 1L10 5M10 1L6 5M8 4V13M7 13H9V15H7Z" /> },
  { label: "Deslocamento", art: <><path d="M1.500 16V1.500H16" strokeWidth="2" /><path d="M6.500 16V6.500H16" strokeDasharray="2 1" /><path d="M5.500 5.500H7.500V7.500H5.500Z" /></> },
];

const tree: { label: string; level: number; icon: React.ReactNode; open?: boolean; closed?: boolean; selected?: boolean }[] = [
  { label: "Cobertura", level: 0, icon: <FloorIcon />, closed: true },
  { label: "Térreo", level: 0, icon: <FloorIcon />, open: true },
  { label: "Hidrantes", level: 1, icon: <NetworkIcon />, open: true },
  { label: "Bh1", level: 2, icon: <PumpIcon /> },
  { label: "Bj1", level: 2, icon: <PumpIcon /> },
  ...Array.from({ length: 8 }, (_, i) => ({ label: `HI-${i + 1}`, level: 2, icon: <RingIcon /> })),
  ...Array.from({ length: 13 }, (_, i) => ({ label: `Hi${i + 1}`, level: 2, icon: <HydrantIcon /> })),
  { label: "RCo1", level: 2, icon: <BoxIcon /> },
  { label: "Preventivo", level: 1, icon: <NetworkIcon /> },
  { label: "Sprinklers", level: 1, icon: <NetworkIcon />, open: true },
  { label: "SP1 (Térreo)", level: 2, icon: <SprinklerIcon />, selected: true },
  { label: "SP2 (Térreo)", level: 2, icon: <SprinklerIcon /> },
  { label: "SP-1", level: 2, icon: <RingIcon /> },
  { label: "SP-2", level: 2, icon: <RingIcon /> },
];

const panelTools: { label: string; icon: React.ReactNode; caret?: boolean; apart?: boolean }[] = [
  { label: "Adicionar", icon: <PlusPair />, caret: true },
  { label: "Editar pavimento", icon: <FolderIcon /> },
  { label: "Excluir", icon: <DeleteIcon /> },
  { label: "Destacar", icon: <TorchIcon /> },
  { label: "Propriedades", icon: <RingInfo /> },
  { label: "Ferramentas", icon: <ToolsIcon />, caret: true, apart: true },
  { label: "Ajuda", icon: <HelpLens /> },
];

const pages: [string, React.ReactNode][] = [
  ["Projeto", <PageTree />],
  ["Propriedades", <PageNote />],
  ["Blocos", <PageBlocks />],
  ["Verificações", <PageCheck />],
  ["Captura", <PageTarget />],
  ["Peças pendentes", <PageGearAlert />],
  ["Gerenciador", <PageDocs />],
  ["Gerenciador de peças", <PageParts />],
];

export default function App() {
  return (
    <Screen>
      <GlobalStyle />
      <Defs />
      <TabStrip>
        {ribbonTabs.map((t) => (
          <RibbonTab key={t.label} $width={t.width} $kind={t.kind}>{t.label}</RibbonTab>
        ))}
      </TabStrip>
      <Ribbon>
        {groups.map((g) => (
          <Group key={g.title}>
            <GroupTools $left={g.left} $right={g.right}>
              {g.tools.map((t) => (
                <BigButton key={t.label} $width={t.width} $active={t.active}>
                  {t.icon}
                  <span>{t.label}</span>
                </BigButton>
              ))}
              {g.small?.map((column, i) => (
                <SmallColumn key={i}>
                  {column.map(([label, icon]) => (
                    <SmallButton key={label} aria-label={label}>{icon}</SmallButton>
                  ))}
                </SmallColumn>
              ))}
            </GroupTools>
            <GroupTitle>{g.title}</GroupTitle>
          </Group>
        ))}
      </Ribbon>

      <Workspace>
        <DrawingPane>
          <DocTabs>
            <DocTab>
              <RedHydrant />
              <DocName>Térreo - Incêndio</DocName>
              <button aria-label="Fechar desenho">
                <Icon w={8}><path d="M0.500 0.500L7.500 7.500M7.500 0.500L0.500 7.500" stroke="#666" strokeWidth="1.200" /></Icon>
              </button>
            </DocTab>
          </DocTabs>
          <Canvas>
            <Crosshair width="40" height="57" viewBox="0 0 40 57" aria-hidden="true">
              <path d="M35.500 0V34M35.500 37V57M0 35.500H34M37 35.500H39" stroke="#000" />
            </Crosshair>
          </Canvas>
        </DrawingPane>

        <Panel>
          <PanelTitle>
            <span>Gerenciador</span>
            <button aria-label="Fechar painel">
              <Icon w={9}><path d="M1 1L8 8M8 1L1 8" stroke="#000" strokeWidth="1.600" /></Icon>
            </button>
          </PanelTitle>
          <PanelTools>
            {panelTools.map((t) => (
              <PanelTool key={t.label} aria-label={t.label} $caret={t.caret} $apart={t.apart}>
                {t.icon}
                {t.caret && <Caret />}
              </PanelTool>
            ))}
          </PanelTools>
          <TreeBox>
            <TreeList>
              {tree.map((n) => (
                <TreeRow key={n.label} $level={n.level}>
                  <Expander aria-label={n.open || n.closed ? `Alternar ${n.label}` : undefined} disabled={!n.open && !n.closed}>
                    {n.open && <Icon w={9}><path d="M0.500 2L4.500 6L8.500 2" stroke="#333" strokeWidth="1.500" /></Icon>}
                    {n.closed && <Icon w={9}><path d="M3 0.500L7 4.500L3 8.500" stroke="#a0a0a0" strokeWidth="1.300" /></Icon>}
                  </Expander>
                  <TreeItem $selected={n.selected}>
                    {n.icon}
                    <span>{n.label}</span>
                  </TreeItem>
                </TreeRow>
              ))}
            </TreeList>
            <ScrollBar>
              <ScrollButton aria-label="Rolar para cima"><Caret up wide /></ScrollButton>
              <Thumb />
              <TrackRest />
              <ScrollButton aria-label="Rolar para baixo"><Caret wide /></ScrollButton>
            </ScrollBar>
          </TreeBox>
          <PageTabs>
            {pages.map(([label, icon]) => (
              <PageTab key={label} aria-label={label} $active={label === "Gerenciador"}>
                {icon}
                {label === "Gerenciador" && (
                  <Pointer width="13" height="20" viewBox="0 0 13 20" aria-hidden="true">
                    <path d="M1 1V15L4.500 12L7 18L9.500 17L7 11H12Z" fill="#fff" stroke="#000" />
                  </Pointer>
                )}
              </PageTab>
            ))}
          </PageTabs>
        </Panel>
      </Workspace>

      <StatusBar>
        <Command>
          Comando - Selecione
          <CommandInput type="text" />
        </Command>
        <Coordinates>-797.5 x 3687.3</Coordinates>
        <ScaleField>
          <ScaleSelect aria-label="Escala" defaultValue="1:50">
            <option>1:50</option>
          </ScaleSelect>
          <ScaleCaret><Caret /></ScaleCaret>
        </ScaleField>
        {statusIcons.map((s) => (
          <StatusButton key={s.label} aria-label={s.label} $active={s.active}>
            <svg width="16" height="16" viewBox="0 0 16 16" fill="none" stroke="#fff" aria-hidden="true">{s.art}</svg>
          </StatusButton>
        ))}
        <Spinner>
          <SpinnerInput aria-label="Distância" defaultValue="3,00" />
          <SpinnerArrows>
            <button aria-label="Aumentar"><Caret up /></button>
            <button aria-label="Diminuir"><Caret /></button>
          </SpinnerArrows>
        </Spinner>
      </StatusBar>
    </Screen>
  );
}
